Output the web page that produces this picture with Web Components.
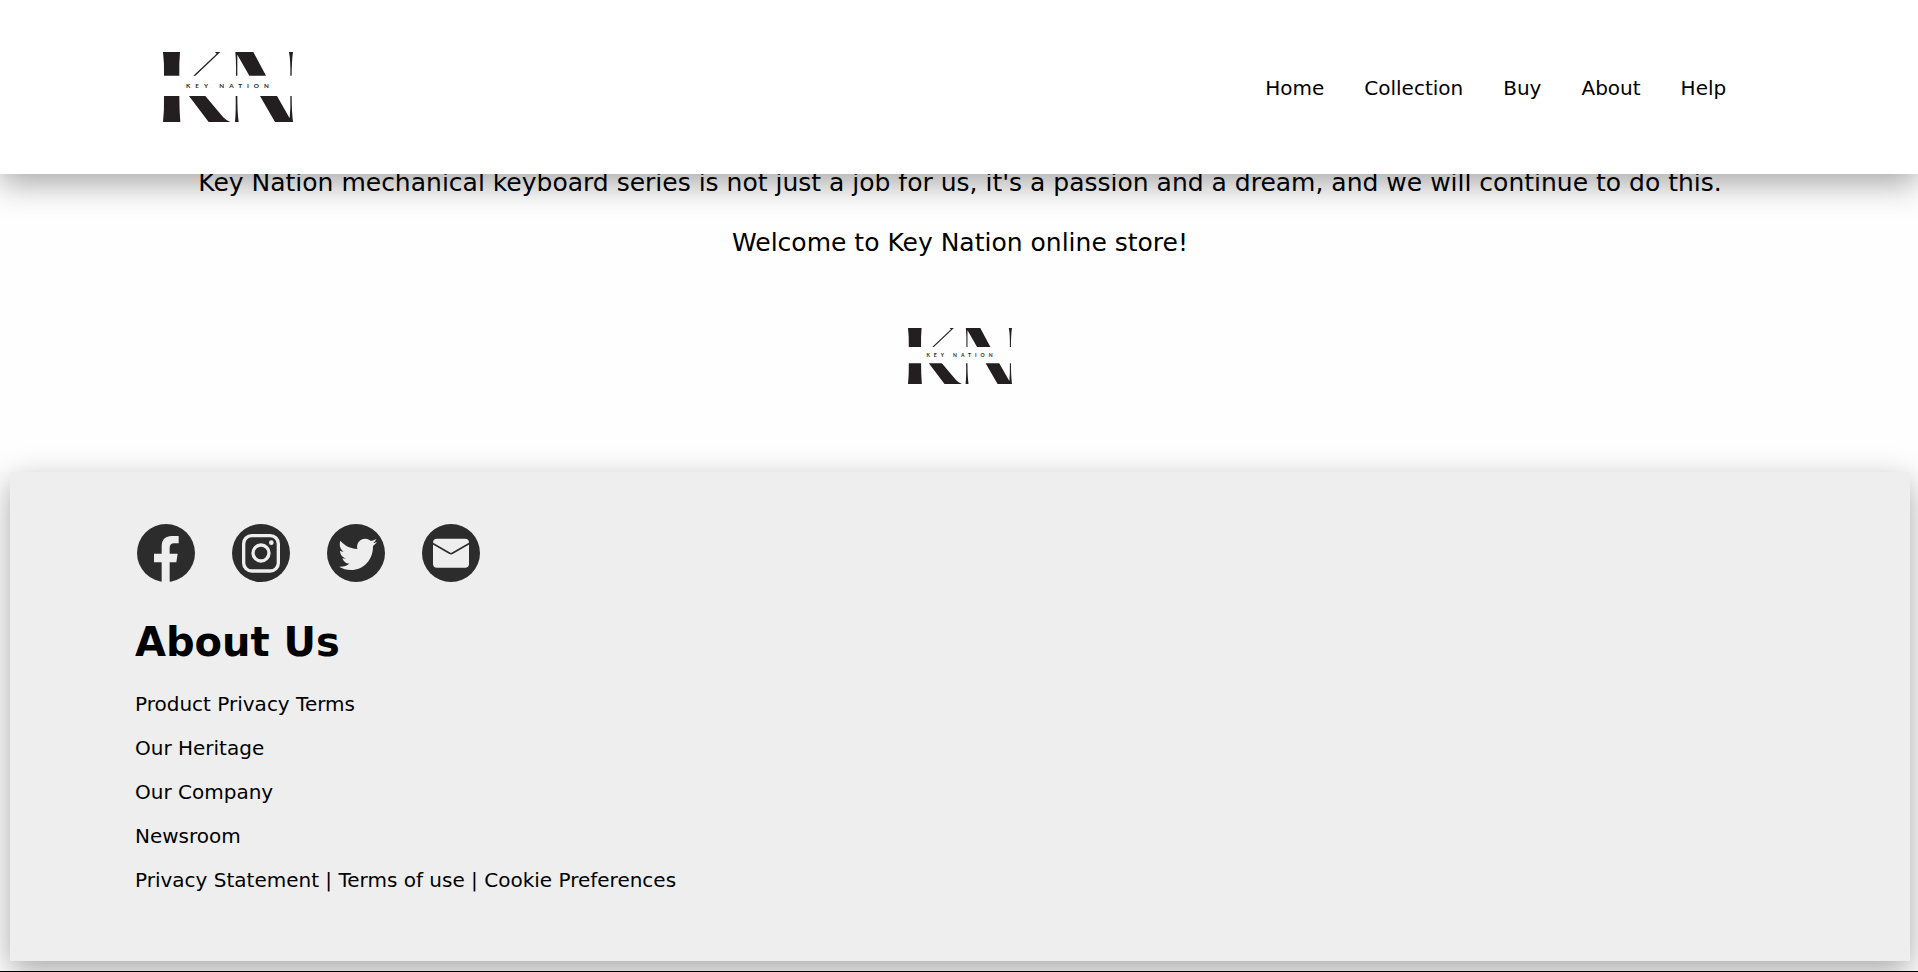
<!DOCTYPE html>
<html lang="en">
<head>
<meta charset="utf-8">
<title>Key Nation</title>
<style>
  body { margin: 0; background: #fefefe; color: #000; font: 20px/24px "DejaVu Sans", Verdana, sans-serif; }
</style>
</head>
<body>
<kn-header>
  <kn-nav-link href="#home">Home</kn-nav-link>
  <kn-nav-link href="#collection">Collection</kn-nav-link>
  <kn-nav-link href="#buy">Buy</kn-nav-link>
  <kn-nav-link href="#about">About</kn-nav-link>
  <kn-nav-link href="#help">Help</kn-nav-link>
</kn-header>
<kn-story>
  <p>Key Nation mechanical keyboard series is not just a job for us, it's a passion and a dream, and we will continue to do this.</p>
  <p>Welcome to Key Nation online store!</p>
</kn-story>
<kn-footer></kn-footer>

<script>
const define = (name, html) => {
  const template = document.createElement('template');
  template.innerHTML = html;
  customElements.define(name, class extends HTMLElement {
    constructor() {
      super();
      this.attachShadow({ mode: 'open' }).append(template.content.cloneNode(true));
    }
    connectedCallback() {
      const link = this.shadowRoot.querySelector('a[data-host]');
      if (link) {
        link.href = this.getAttribute('href');
        if (this.hasAttribute('label')) link.setAttribute('aria-label', this.getAttribute('label'));
      }
    }
  });
};

define('kn-logo', `
  <style>
    :host { display: block; width: 130px; }
    svg { display: block; width: 100%; }
    text { font: 700 19px Lato, sans-serif; letter-spacing: 15px; }
  </style>
  <svg viewBox="69 66 390 210" fill="#231f20" role="img" aria-label="Key Nation logo">
    <path d="M69 66H120Q117 100 118 137H72Q73 100 69 66Z"/>
    <path d="M72 198H118Q118 240 121 276H69Q73 240 72 198Z"/>
    <path d="M225 66H241L166 137H160L230 71Z"/>
    <path d="M147 198H196L249 261Q258 271 271 276H206Z"/>
    <path d="M286 66H340L378 137H328L292 74V137H288Q289 98 286 66Z"/>
    <path d="M287 198H292Q292 248 296 276H285Q288 244 287 198Z"/>
    <path d="M447 66H459Q455 92 455 137H451Q452 92 447 66Z"/>
    <path d="M360 198H411L449 265Q452 236 451 198H455Q455 244 459 276H405Z"/>
    <text x="138" y="174">KEY NATION</text>
  </svg>`);

define('kn-nav-link', `
  <style>
    :host { display: block; }
    a { color: inherit; text-decoration: none; }
  </style>
  <a data-host><slot></slot></a>`);

define('kn-header', `
  <style>
    :host { display: block; position: sticky; top: 0; z-index: 2; background: #fff; box-shadow: 0 10px 30px rgba(0,0,0,.34); }
    header { display: flex; justify-content: space-between; align-items: center; padding: 52px 10% 52px 8.5%; }
    nav { display: flex; gap: 40px; padding-top: 2px; }
  </style>
  <header>
    <kn-logo></kn-logo>
    <nav aria-label="Main"><slot></slot></nav>
  </header>`);

define('kn-story', `
  <style>
    :host { display: block; margin-top: -6px; padding: 0 8px 88px 10px; text-align: center; font-size: 25px; line-height: 30px; }
    ::slotted(p) { margin: 0 0 30px; }
    kn-logo { width: 104px; margin: 70px auto 0; }
  </style>
  <slot></slot>
  <kn-logo></kn-logo>`);

define('kn-social', `
  <style>
    :host { display: block; }
    a { display: block; color: #2c2c2c; }
    ::slotted(svg) { display: block; width: 58px; height: 58px; }
  </style>
  <a data-host><slot></slot></a>`);

define('kn-footer', `
  <style>
    :host { display: block; border-bottom: 1px solid #000; padding: 0 8px 10px 10px; clip-path: inset(-40px 0 0 0); }
    footer { background: #eee; padding: 52px 125px 69px; box-shadow: 0 10px 30px rgba(0,0,0,.34); }
    .social { display: flex; gap: 37px; padding-left: 2px; }
    h2 { margin: 36px 0 26px; font-size: 40px; line-height: 48px; }
    ul { list-style: none; margin: 0; padding: 0; display: grid; gap: 20px; }
    a { color: inherit; text-decoration: none; }
  </style>
  <footer>
    <div class="social">
      <kn-social href="#facebook" label="Facebook"><svg viewBox="0 0 174 174"><circle cx="87" cy="87" r="87" fill="#2c2c2c"/><path fill="#eee" d="M74 174V115H51V89H74V67C74 46 86 36 104 36H125V58H112C102 58 98 63 98 72V89H122L118 115H98V174Z"/></svg></kn-social>
      <kn-social href="#instagram" label="Instagram"><svg viewBox="0 0 174 174"><circle cx="87" cy="87" r="87" fill="#2c2c2c"/><g fill="none" stroke="#eee" stroke-width="10"><rect x="35" y="35" width="104" height="106" rx="24"/><circle cx="87" cy="87" r="24"/></g><circle cx="118" cy="56" r="7" fill="#eee"/></svg></kn-social>
      <kn-social href="#twitter" label="Twitter"><svg viewBox="0 0 174 174"><circle cx="87" cy="87" r="87" fill="#2c2c2c"/><path fill="#eee" d="M40 50C53 65 70 74 91 75C87 57 99 44 115 44C122 44 128 47 132 51C137 50 143 48 148 45C146 50 143 54 139 57C143 57 147 55 150 54C147 58 143 62 138 66C139 107 110 138 72 138C59 138 46 134 36 128C48 129 59 126 67 119C57 119 49 112 46 103C50 104 54 104 57 103C46 100 39 91 39 80C42 82 46 83 50 83C39 75 36 62 40 50Z"/></svg></kn-social>
      <kn-social href="#mail" label="Email"><svg viewBox="0 0 174 174"><circle cx="87" cy="87" r="87" fill="#2c2c2c"/><rect x="33" y="44" width="108" height="87" rx="12" fill="#eee"/><path d="M31 58L83 88Q87 90 91 88L143 58" fill="none" stroke="#2c2c2c" stroke-width="5"/></svg></kn-social>
    </div>
    <h2>About Us</h2>
    <ul>
      <li><a href="#terms">Product Privacy Terms</a></li>
      <li><a href="#heritage">Our Heritage</a></li>
      <li><a href="#company">Our Company</a></li>
      <li><a href="#newsroom">Newsroom</a></li>
      <li><a href="#privacy">Privacy Statement</a> | <a href="#use">Terms of use</a> | <a href="#cookies">Cookie Preferences</a></li>
    </ul>
  </footer>`);
</script>
</body>
</html>
